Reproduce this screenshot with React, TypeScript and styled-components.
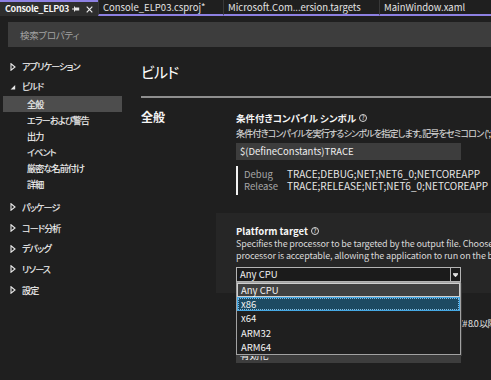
import React from "react";
import styled, { createGlobalStyle, css } from "styled-components";

const Global = createGlobalStyle`
  html, body { margin: 0; padding: 0; background: #1f1f1f; }
  body {
    width: 491px; height: 380px; overflow: hidden;
    font-family: "Noto Sans CJK JP", "Noto Sans", sans-serif;
    font-feature-settings: "palt";
    color: #e8e8e8;
  }
  #root { width: 491px; height: 380px; overflow: hidden; position: relative; }
`;

const TabBar = styled.div`
  display: flex;
  height: 16px;
  background: #1f1f1f;
`;

const Tab = styled.div<{ $w?: number; $active?: boolean }>`
  box-sizing: border-box;
  ${(p) => (p.$w ? `width: ${p.$w}px; flex-shrink: 0;` : "flex: 1;")}
  height: 16px;
  display: flex;
  align-items: center;
  padding-left: 4px;
  font-size: 9.5px;
  white-space: nowrap;
  overflow: hidden;
  ${(p) =>
    p.$active
      ? css`
          background: #2e2e2e;
          border-top: 2px solid #8d80e2;
          font-weight: 700;
          font-size: 9px;
          letter-spacing: -0.3px;
          color: #f4f4f4;
          padding-left: 5px;
        `
      : css`
          background: #1f1f1f;
          border-bottom: 2px solid #8d80e2;
          border-left: 1px solid #383838;
          color: #e4e4e4;
        `}
`;

const TabLabel = styled.span`
  flex: 1;
  line-height: 12px;
`;

const TabIcons = styled.span`
  display: flex;
  align-items: center;
  gap: 6px;
  padding-right: 5px;
`;

const Page = styled.div`
  padding: 6px 0 0 3px;
`;

const SearchBox = styled.div`
  margin-left: 5px;
  height: 25px;
  background: #3d3d3d;
  display: flex;
  align-items: center;
  padding-left: 12px;
  font-size: 9.5px;
  letter-spacing: -0.3px;
  color: #a2a2a2;
`;

const Body = styled.div`
  display: flex;
  margin-top: 9px;
`;

const Sidebar = styled.div`
  width: 119px;
  flex-shrink: 0;
  font-size: 9px;
  letter-spacing: -0.8px;
  color: #f2f2f2;
  -webkit-text-stroke: 0.15px #f2f2f2;
`;

const NavRow = styled.div<{ $h: number }>`
  height: ${(p) => p.$h}px;
  display: flex;
  align-items: center;
  padding-left: 7px;
  gap: 6px;
`;

const SubGroup = styled.div`
  margin-bottom: 5px;
`;

const SubRow = styled.div<{ $selected?: boolean }>`
  height: 16px;
  display: flex;
  align-items: center;
  padding-left: 24px;
  background: ${(p) => (p.$selected ? "#4d4d4d" : "transparent")};
`;

const Main = styled.div`
  flex: 1;
  min-width: 0;
  margin-left: 19px;
`;

const Heading = styled.div`
  margin-top: 6px;
  font-size: 15px;
  line-height: 20px;
  letter-spacing: -0.8px;
  color: #ffffff;
`;

const Rule = styled.div`
  margin-top: 14px;
  height: 2px;
  background: #8e8e8e;
`;

const Section = styled.div`
  display: flex;
  padding-top: 12px;
`;

const SectionTitle = styled.div`
  width: 95px;
  flex-shrink: 0;
  font-size: 12px;
  line-height: 14px;
  font-weight: 700;
  color: #f4f4f4;
`;

const SettingsCol = styled.div`
  flex: 1;
  min-width: 0;
`;

const SettingTitle = styled.div<{ $top?: number }>`
  margin-top: ${(p) => p.$top ?? 0}px;
  display: flex;
  align-items: center;
  gap: 3px;
  font-size: 9.5px;
  line-height: 12px;
  font-weight: 700;
  color: #f6f6f6;
  white-space: nowrap;
`;

const QIcon = styled.span`
  display: inline-flex;
  align-items: center;
  justify-content: center;
  box-sizing: border-box;
  width: 8px;
  height: 8px;
  border: 1px solid #d8d8d8;
  border-radius: 50%;
  font-size: 6px;
  line-height: 6px;
  font-weight: 400;
  letter-spacing: 0;
`;

const Desc = styled.div<{ $top?: number; $ja?: boolean }>`
  margin-top: ${(p) => p.$top ?? 0}px;
  font-size: 9px;
  letter-spacing: ${(p) => (p.$ja ? -0.8 : -0.15)}px;
  line-height: 12px;
  color: #d8d8d8;
  white-space: nowrap;
  ${(p) => p.$ja && "-webkit-text-stroke: 0.12px #d8d8d8;"}
`;

const Input = styled.div<{ $top?: number; $h?: number }>`
  margin-top: ${(p) => p.$top ?? 0}px;
  box-sizing: border-box;
  width: 225px;
  height: ${(p) => p.$h ?? 17}px;
  line-height: ${(p) => p.$h ?? 17}px;
  background: #3d3d3d;
  padding-left: 4px;
  font-size: 9.5px;
  color: #f0f0f0;
  white-space: nowrap;
`;

const Conditions = styled.div`
  margin-top: 6px;
  width: 225px;
  box-sizing: border-box;
  border-left: 2px solid #f2f2f2;
  padding: 2px 0 3px 6px;
  display: grid;
  grid-template-columns: 43px 1fr;
  justify-items: start;
  font-size: 10px;
  line-height: 12px;
  white-space: nowrap;
`;

const CondLabel = styled.span`
  color: #a6a6a6;
  font-size: 9.5px;
`;

const CondValue = styled.span`
  color: #e6e6e6;
`;

const Panel = styled.div`
  margin-top: 18px;
  margin-left: -20px;
  padding: 12px 0 11px 20px;
  background: #262626;
`;

const Select = styled.div`
  position: relative;
  margin-top: 5px;
  box-sizing: border-box;
  width: 225px;
  height: 15px;
  display: flex;
  border: 1px solid #b4b4b4;
  background: #1b1b1b;
`;

const SelectValue = styled.div`
  flex: 1;
  padding-left: 3px;
  font-size: 9.5px;
  line-height: 13px;
  color: #f0f0f0;
`;

const SelectArrow = styled.div`
  width: 9px;
  border-left: 1px solid #b4b4b4;
  display: flex;
  align-items: center;
  justify-content: center;
`;

const DropList = styled.div`
  position: absolute;
  left: -1px;
  top: 14px;
  z-index: 10;
  box-sizing: border-box;
  width: 225px;
  height: 73px;
  border: 1px solid #a2a2a2;
  background: #1f1f1f;
  box-shadow: 1px 1px 0 #3a3a3a;
`;

const Option = styled.div<{ $kind?: "current" | "selected" }>`
  box-sizing: border-box;
  height: 14.2px;
  display: flex;
  align-items: center;
  padding-left: 4px;
  font-size: 9.5px;
  color: #f2f2f2;
  ${(p) =>
    p.$kind === "current" &&
    css`
      background: #404040;
      border: 1px solid #cfcfcf;
      padding-left: 3px;
    `}
  ${(p) =>
    p.$kind === "selected" &&
    css`
      background: #1d4a62;
      border: 1px solid #45a8e4;
      outline: 1px dotted #7fbde6;
      outline-offset: -2px;
      padding-left: 3px;
    `}
`;

const Collapsed = () => (
  <svg width="6" height="8" viewBox="0 0 6 8">
    <path d="M1 0.8 L5 4 L1 7.2 Z" fill="none" stroke="#e8e8e8" strokeWidth="1.1" />
  </svg>
);

const Expanded = () => (
  <svg width="6" height="8" viewBox="0 0 6 8">
    <path d="M5.2 2 L5.2 6.6 L0.6 6.6 Z" fill="#e8e8e8" />
  </svg>
);

const PinIcon = () => (
  <svg width="8" height="6" viewBox="0 0 8 6">
    <path d="M0 3 H2.5 M2.5 0.5 V5.5" stroke="#e6e6e6" strokeWidth="1" fill="none" />
    <rect x="3" y="1.5" width="4.2" height="3" fill="#e6e6e6" />
  </svg>
);

const CloseIcon = () => (
  <svg width="7" height="7" viewBox="0 0 7 7">
    <path d="M0.7 0.7 L6.3 6.3 M6.3 0.7 L0.7 6.3" stroke="#ececec" strokeWidth="1.2" />
  </svg>
);

const ArrowDown = () => (
  <svg width="5" height="4" viewBox="0 0 5 4">
    <path d="M0 0.5 H5 M0.3 1.5 H4.7 L2.5 3.8 Z" stroke="#f0f0f0" strokeWidth="0.8" fill="#f0f0f0" />
  </svg>
);

const topNavBefore = ["アプリケーション"];
const buildChildren = ["全般", "エラーおよび警告", "出力", "イベント", "厳密な名前付け", "詳細"];
const topNavAfter = ["パッケージ", "コード分析", "デバッグ", "リソース", "設定"];
const platforms = ["Any CPU", "x86", "x64", "ARM32", "ARM64"];

export default function App() {
  return (
    <>
      <Global />
      <TabBar>
        <Tab $w={98} $active>
          <TabLabel>Console_ELP03</TabLabel>
          <TabIcons>
            <PinIcon />
            <CloseIcon />
          </TabIcons>
        </Tab>
        <Tab $w={125}>
          <TabLabel>Console_ELP03.csproj*</TabLabel>
        </Tab>
        <Tab $w={156}>
          <TabLabel>Microsoft.Com...ersion.targets</TabLabel>
        </Tab>
        <Tab>
          <TabLabel>MainWindow.xaml</TabLabel>
        </Tab>
      </TabBar>
      <Page>
        <SearchBox>検索プロパティ</SearchBox>
        <Body>
          <Sidebar>
            {topNavBefore.map((t) => (
              <NavRow key={t} $h={21}>
                <Collapsed />
                {t}
              </NavRow>
            ))}
            <NavRow $h={19}>
              <Expanded />
              ビルド
            </NavRow>
            <SubGroup>
              {buildChildren.map((t, i) => (
                <SubRow key={t} $selected={i === 0}>
                  {t}
                </SubRow>
              ))}
            </SubGroup>
            {topNavAfter.map((t) => (
              <NavRow key={t} $h={20.7}>
                <Collapsed />
                {t}
              </NavRow>
            ))}
          </Sidebar>
          <Main>
            <Heading>ビルド</Heading>
            <Rule />
            <Section>
              <SectionTitle>全般</SectionTitle>
              <SettingsCol>
                <SettingTitle $top={2}>
                  条件付きコンパイル シンボル <QIcon>?</QIcon>
                </SettingTitle>
                <Desc $top={4} $ja>
                  条件付きコンパイルを実行するシンボルを指定します。記号をセミコロン (';') で区切ってください。
                </Desc>
                <Input $top={3}>$(DefineConstants)TRACE</Input>
                <Conditions>
                  <CondLabel>Debug</CondLabel>
                  <CondValue>TRACE;DEBUG;NET;NET6_0;NETCOREAPP</CondValue>
                  <CondLabel>Release</CondLabel>
                  <CondValue>TRACE;RELEASE;NET;NET6_0;NETCOREAPP</CondValue>
                </Conditions>
                <Panel>
                  <SettingTitle>
                    Platform target <QIcon>?</QIcon>
                  </SettingTitle>
                  <Desc $top={1}>
                    Specifies the processor to be targeted by the output file. Choose 'Any CPU' to specify that any
                  </Desc>
                  <Desc>
                    processor is acceptable, allowing the application to run on the broadest range of hardware.
                  </Desc>
                  <Select>
                    <SelectValue>Any CPU</SelectValue>
                    <SelectArrow>
                      <ArrowDown />
                    </SelectArrow>
                    <DropList>
                      {platforms.map((p, i) => (
                        <Option key={p} $kind={i === 0 ? "current" : i === 1 ? "selected" : undefined}>
                          {p}
                        </Option>
                      ))}
                    </DropList>
                  </Select>
                </Panel>
                <SettingTitle $top={12}>
                  Null 許容 <QIcon>?</QIcon>
                </SettingTitle>
                <Desc $top={1} $ja>
                  プロジェクト全体で使用する null 許容コンテキストを指定します。C# 8.0 以降で使用できます。
                </Desc>
                <Desc $ja>以前のバージョンでは無視されます。</Desc>
                <Input $top={5} $h={16}>
                  有効化
                </Input>
              </SettingsCol>
            </Section>
          </Main>
        </Body>
      </Page>
    </>
  );
}
